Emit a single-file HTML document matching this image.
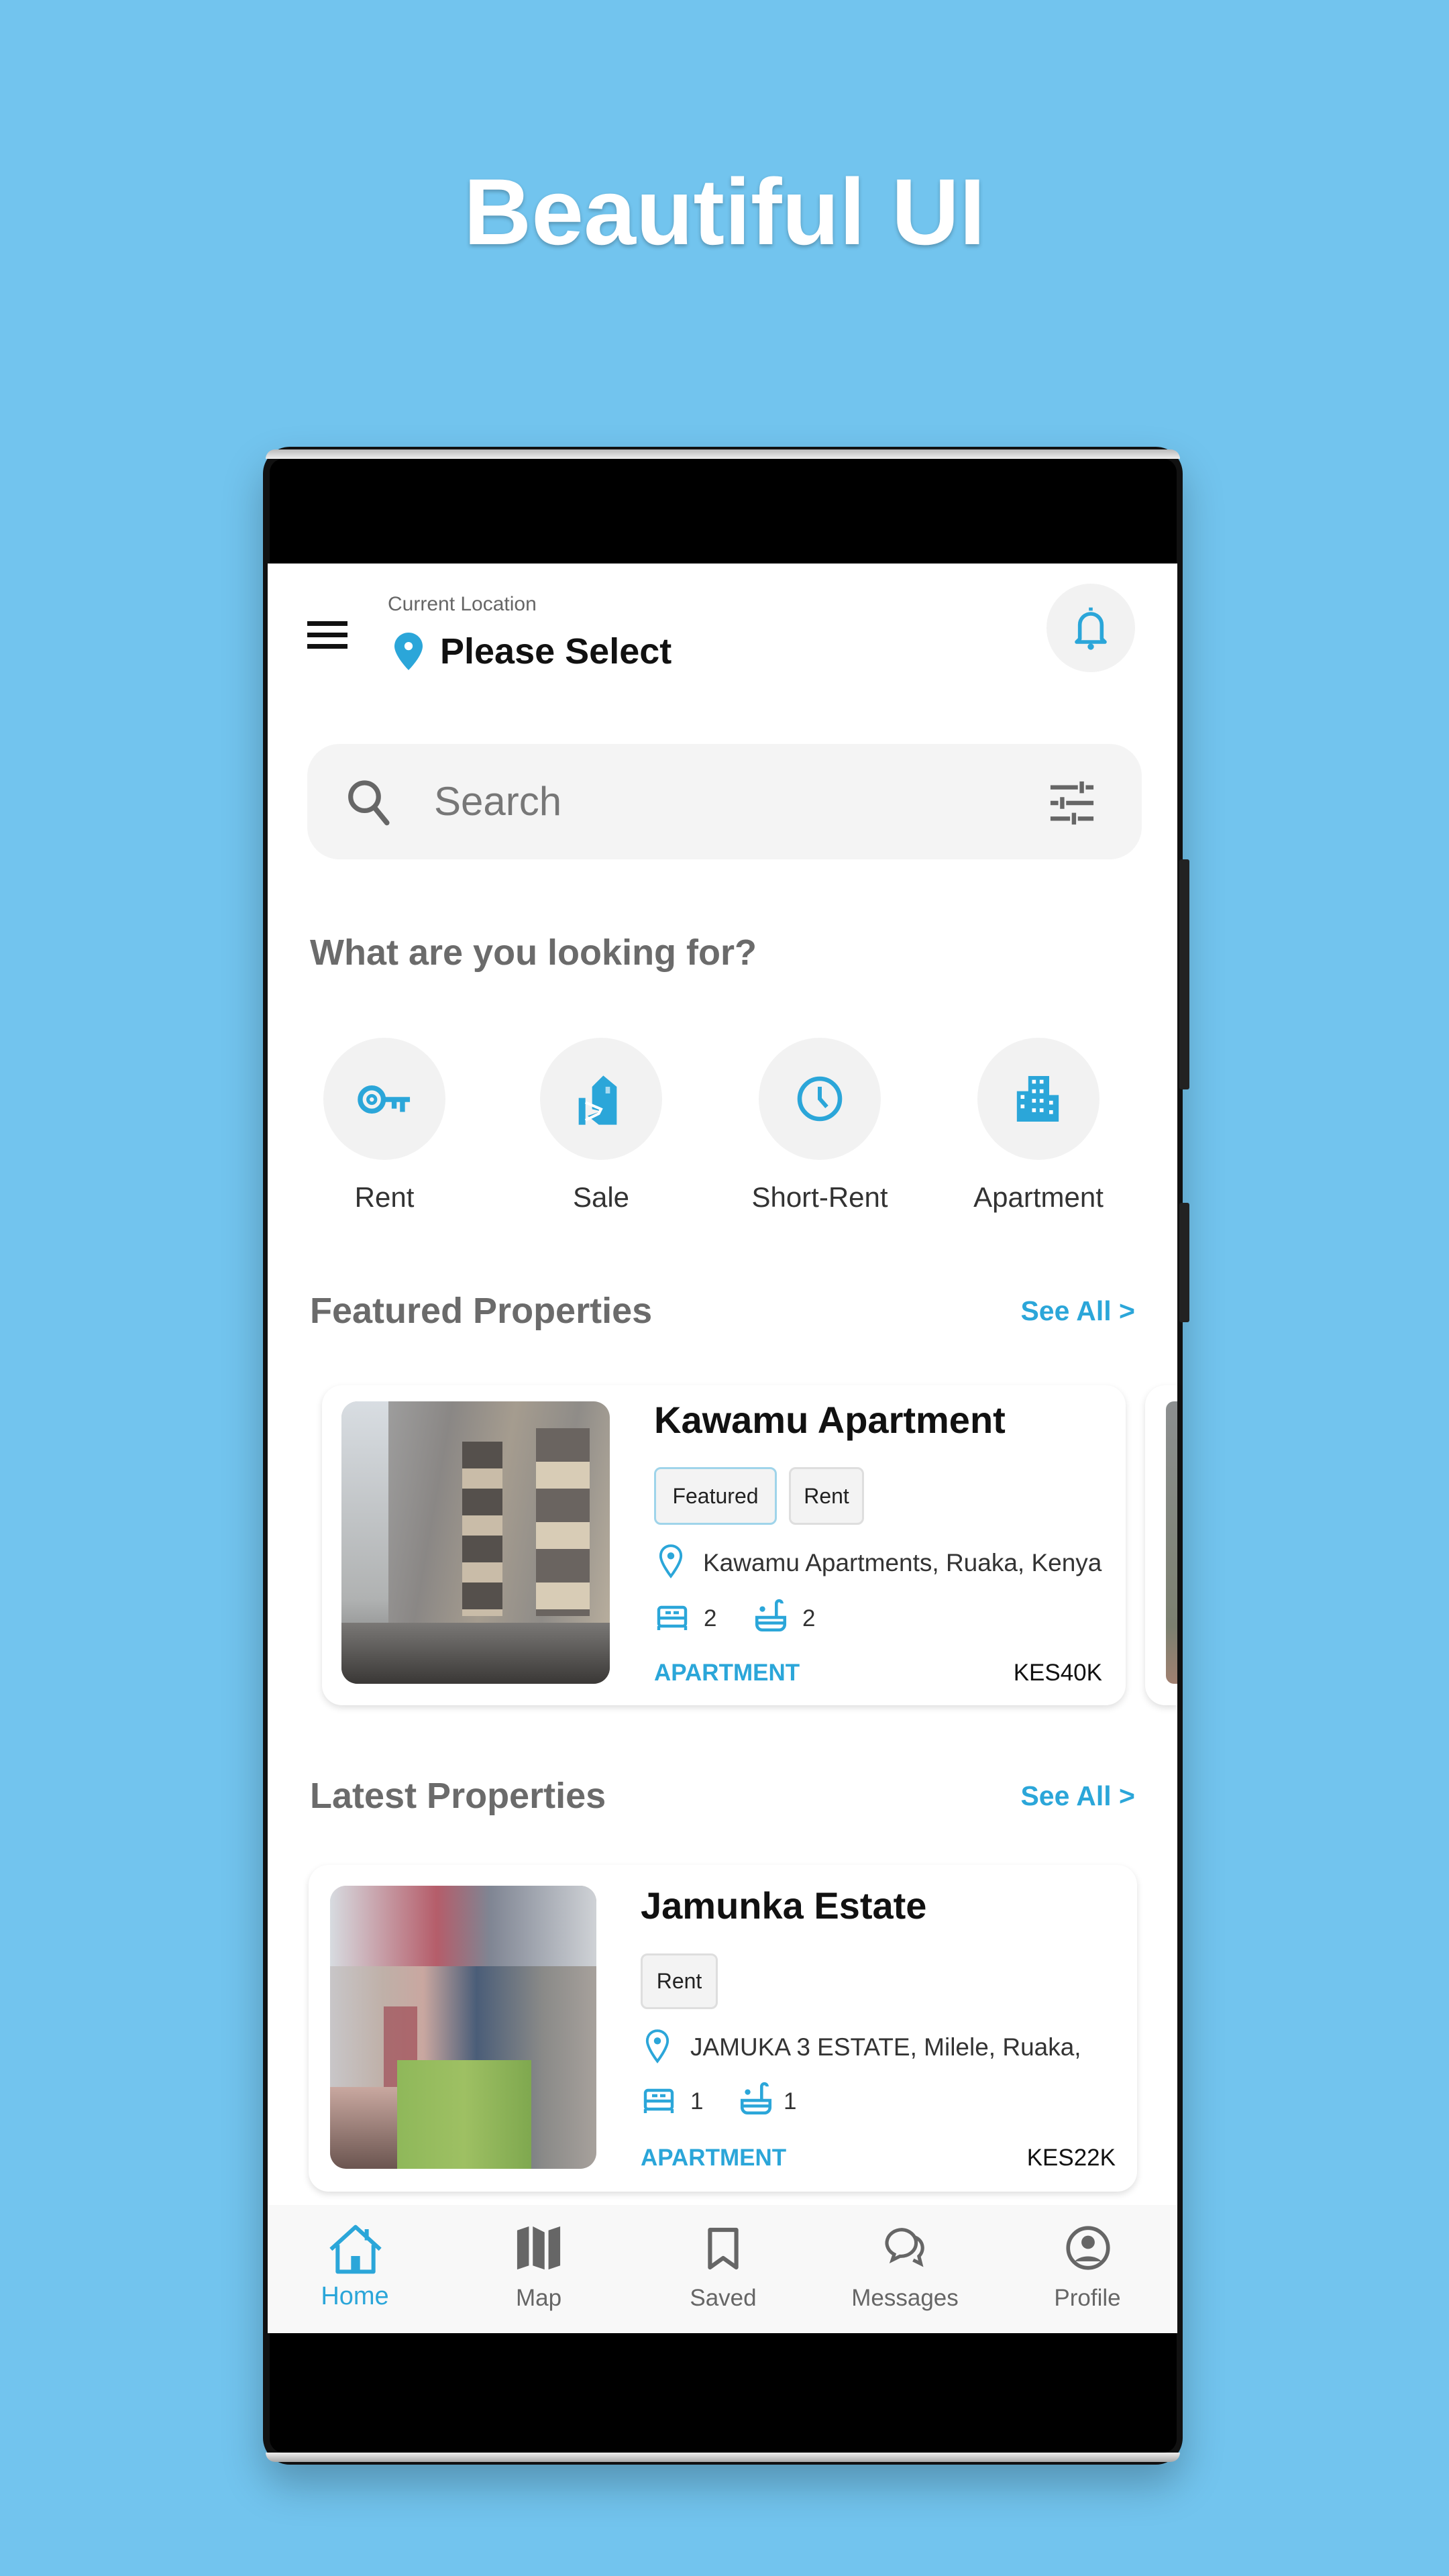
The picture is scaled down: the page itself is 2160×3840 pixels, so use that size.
<!DOCTYPE html>
<html><head><meta charset="utf-8">
<style>
*{margin:0;padding:0;box-sizing:border-box}
body{width:2160px;height:3840px;background:#72c4ee;position:relative;overflow:hidden;font-family:"Liberation Sans",sans-serif}
.a{position:absolute;line-height:1;white-space:nowrap}
.blue{color:#2ba6d9}
.circ{position:absolute;border-radius:50%;background:#f2f2f2}
.tag{position:absolute;background:#f3f3f3;border:3px solid #dedede;border-radius:10px;font-size:32px;color:#222;display:flex;align-items:center;justify-content:center}
.card{position:absolute;background:#fff;border-radius:30px;box-shadow:0 4px 10px rgba(0,0,0,.13)}
</style></head><body>
<div class="a" style="left:0;width:2160px;text-align:center;top:246px;font-size:140px;font-weight:bold;color:#fff;text-shadow:0 3px 6px rgba(0,0,0,.25)">Beautiful UI</div>

<!-- phone frame -->
<div style="position:absolute;left:392px;top:666px;width:1371px;height:3008px;border-radius:40px;background:#111;box-shadow:0 30px 60px rgba(0,0,0,.25)"></div>
<div style="position:absolute;left:396px;top:670px;width:1363px;height:14px;border-radius:20px 20px 0 0;background:linear-gradient(#bbb,#eee)"></div>
<div style="position:absolute;left:396px;top:3656px;width:1363px;height:14px;border-radius:0 0 20px 20px;background:linear-gradient(#eee,#aaa)"></div>
<div style="position:absolute;left:1758px;top:1281px;width:15px;height:343px;background:#222;border-radius:3px"></div>
<div style="position:absolute;left:1758px;top:1793px;width:15px;height:178px;background:#222;border-radius:3px"></div>
<div style="position:absolute;left:402px;top:684px;width:1352px;height:2972px;background:#000;border-radius:20px"></div>

<!-- screen -->
<div style="position:absolute;left:399px;top:840px;width:1356px;height:2638px;background:#fff;overflow:hidden"></div>

<div style="position:absolute;left:0;top:0;width:2160px;height:3840px">
<!-- header -->
<div style="position:absolute;left:458px;top:926px;width:60px;height:7px;background:#111"></div>
<div style="position:absolute;left:458px;top:943px;width:60px;height:7px;background:#111"></div>
<div style="position:absolute;left:458px;top:960px;width:60px;height:7px;background:#111"></div>
<div class="a" style="left:578px;top:886px;font-size:30px;color:#666">Current Location</div>
<svg style="position:absolute;left:588px;top:943px" width="42" height="56" viewBox="0 0 24 32"><path d="M12 0C5.4 0 0 5.2 0 11.6 0 20 12 32 12 32s12-12 12-20.4C24 5.2 18.6 0 12 0z" fill="#2ba6d9"/><circle cx="12" cy="11.5" r="3.5" fill="#fff"/></svg>
<div class="a" style="left:656px;top:944px;font-size:54px;font-weight:bold;color:#111">Please Select</div>
<div class="circ" style="left:1560px;top:870px;width:132px;height:132px"></div>
<svg style="position:absolute;left:1598px;top:900px" width="56" height="72" viewBox="0 0 24 30"><path d="M12 2v2M5 22V13a7 7 0 0 1 14 0v9l2 2H3z" fill="none" stroke="#2ba6d9" stroke-width="2.4" stroke-linejoin="round"/><circle cx="12" cy="27" r="2" fill="#2ba6d9"/></svg>

<!-- search -->
<div style="position:absolute;left:458px;top:1109px;width:1244px;height:172px;border-radius:48px;background:#f4f4f4"></div>
<svg style="position:absolute;left:515px;top:1160px" width="68" height="72" viewBox="0 0 24 26"><circle cx="10" cy="10" r="7.5" fill="none" stroke="#666" stroke-width="2.6"/><path d="M15.5 16l6.5 8" stroke="#666" stroke-width="2.8" stroke-linecap="round"/></svg>
<div class="a" style="left:647px;top:1165px;font-size:60px;color:#777">Search</div>
<svg style="position:absolute;left:1562px;top:1162px" width="72" height="70" viewBox="0 0 24 24"><g stroke="#666" stroke-width="2.2"><path d="M1 4h14M19 4h4M17 1v6M1 12h4M9 12h14M7 9v6M1 20h10M15 20h8M13 17v6"/></g></svg>

<div class="a" style="left:462px;top:1393px;font-size:54px;font-weight:bold;color:#6b6b6b">What are you looking for?</div>

<!-- categories -->
<div class="circ" style="left:482px;top:1547px;width:182px;height:182px"></div>
<div class="circ" style="left:805px;top:1547px;width:182px;height:182px"></div>
<div class="circ" style="left:1131px;top:1547px;width:182px;height:182px"></div>
<div class="circ" style="left:1457px;top:1547px;width:182px;height:182px"></div>
<svg style="position:absolute;left:532px;top:1614px" width="84" height="50" viewBox="0 0 34 20"><circle cx="9" cy="10" r="7" fill="none" stroke="#2ba6d9" stroke-width="3"/><circle cx="9" cy="10" r="2.3" fill="none" stroke="#2ba6d9" stroke-width="2"/><path d="M16 8.5h16v3h-3v6h-3v-6h-2v4h-3v-4h-5z" fill="#2ba6d9"/></svg>
<svg style="position:absolute;left:856px;top:1600px" width="80" height="80" viewBox="0 0 24 24"><path d="M13 1l6 5v17h-8l-5-4 6-2-4-1V6z" fill="#2ba6d9"/><rect x="2" y="11" width="3" height="12" fill="#2ba6d9"/><path d="M5 13l7 3-1 2-6 3" fill="none" stroke="#fff" stroke-width="1.2"/><rect x="14" y="6" width="2" height="3" fill="#fff" opacity=".6"/></svg>
<svg style="position:absolute;left:1186px;top:1602px" width="72" height="72" viewBox="0 0 24 24"><circle cx="12" cy="12" r="10" fill="none" stroke="#2ba6d9" stroke-width="2.2"/><path d="M12 6v6l3.5 4" fill="none" stroke="#2ba6d9" stroke-width="2"/></svg>
<svg style="position:absolute;left:1514px;top:1604px" width="66" height="68" viewBox="0 0 22 24"><path d="M0 8h6V0h11v10h5v14H0z" fill="#2ba6d9"/><g fill="#fff"><rect x="8" y="2" width="2" height="2"/><rect x="12" y="2" width="2" height="2"/><rect x="2" y="10" width="2" height="2"/><rect x="8" y="7" width="2" height="2"/><rect x="12" y="7" width="2" height="2"/><rect x="8" y="12" width="2" height="2"/><rect x="12" y="12" width="2" height="2"/><rect x="17" y="13" width="2" height="2"/><rect x="2" y="15" width="2" height="2"/><rect x="8" y="17" width="2" height="2"/><rect x="12" y="17" width="2" height="2"/><rect x="17" y="18" width="2" height="2"/></g></svg>
<div class="a" style="left:473px;width:200px;text-align:center;top:1764px;font-size:42px;color:#333">Rent</div>
<div class="a" style="left:796px;width:200px;text-align:center;top:1764px;font-size:42px;color:#333">Sale</div>
<div class="a" style="left:1072px;width:300px;text-align:center;top:1764px;font-size:42px;color:#333">Short-Rent</div>
<div class="a" style="left:1398px;width:300px;text-align:center;top:1764px;font-size:42px;color:#333">Apartment</div>

<div class="a" style="left:462px;top:1927px;font-size:54px;font-weight:bold;color:#6b6b6b">Featured Properties</div>
<div class="a blue" style="right:468px;top:1934px;font-size:41px;font-weight:bold">See All &gt;</div>

<!-- featured card -->
<div class="card" style="left:480px;top:2065px;width:1198px;height:477px"></div>
<div class="card" style="left:1707px;top:2065px;width:48px;height:477px;border-radius:30px 0 0 30px"></div>
<div style="position:absolute;left:1738px;top:2089px;width:17px;height:421px;background:linear-gradient(#8c8f90,#7c8070 80%,#a08070);border-radius:12px 0 0 12px"></div>
<div style="position:absolute;left:509px;top:2089px;width:400px;height:421px;border-radius:24px;overflow:hidden;background:linear-gradient(100deg,#c9ccd0 0%,#a0a0a0 12%,#8a8785 35%,#a59c8f 55%,#8f8c88 75%,#bdb2a0 100%)">
<div style="position:absolute;left:0;top:0;width:70px;height:421px;background:linear-gradient(#d8dde2,#b0b2b2 70%,#6b6b6b)"></div>
<div style="position:absolute;left:0;top:330px;width:400px;height:91px;background:linear-gradient(#7a7876,#3a3836)"></div>
<div style="position:absolute;left:180px;top:60px;width:60px;height:260px;background:repeating-linear-gradient(#55504c 0 40px,#c9bca8 40px 70px)"></div>
<div style="position:absolute;left:290px;top:40px;width:80px;height:280px;background:repeating-linear-gradient(#6a6460 0 50px,#d8ccb6 50px 90px)"></div>
</div>
<div class="a" style="left:975px;top:2089px;font-size:56px;font-weight:bold;color:#111">Kawamu Apartment</div>
<div class="tag" style="left:975px;top:2187px;width:183px;height:86px;border-color:#9fd4ea">Featured</div>
<div class="tag" style="left:1176px;top:2187px;width:112px;height:86px">Rent</div>
<svg style="position:absolute;left:982px;top:2302px" width="36" height="52" viewBox="0 0 16 24"><path d="M8 1C4 1 1 4 1 8c0 5 7 14 7 14s7-9 7-14c0-4-3-7-7-7z" fill="none" stroke="#2ba6d9" stroke-width="1.8"/><circle cx="8" cy="8" r="2.4" fill="#2ba6d9"/></svg>
<div class="a" style="left:1048px;top:2311px;font-size:37px;color:#333">Kawamu Apartments, Ruaka, Kenya</div>
<svg style="position:absolute;left:978px;top:2392px" width="48" height="40" viewBox="0 0 24 20"><g fill="none" stroke="#2ba6d9" stroke-width="2.2"><rect x="2" y="2" width="20" height="14" rx="2"/><path d="M2 10h20M2 16v3M22 16v3M7 6h4M13 6h4"/></g></svg>
<div class="a" style="left:1049px;top:2395px;font-size:35px;color:#333">2</div>
<svg style="position:absolute;left:1124px;top:2382px" width="50" height="54" viewBox="0 0 24 26"><g fill="none" stroke="#2ba6d9" stroke-width="2.2"><path d="M16 14V4a2 2 0 0 1 4 0"/><path d="M2 14h20v5a4 4 0 0 1-4 4H6a4 4 0 0 1-4-4z"/><path d="M2 18h20"/></g><circle cx="6" cy="8" r="2" fill="#2ba6d9"/></svg>
<div class="a" style="left:1196px;top:2395px;font-size:35px;color:#333">2</div>
<div class="a blue" style="left:975px;top:2476px;font-size:35px;font-weight:bold">APARTMENT</div>
<div class="a" style="right:517px;top:2476px;font-size:35px;color:#111">KES40K</div>

<div class="a" style="left:462px;top:2650px;font-size:54px;font-weight:bold;color:#6b6b6b">Latest Properties</div>
<div class="a blue" style="right:468px;top:2657px;font-size:41px;font-weight:bold">See All &gt;</div>

<!-- latest card -->
<div class="card" style="left:460px;top:2780px;width:1235px;height:487px"></div>
<div style="position:absolute;left:492px;top:2811px;width:397px;height:422px;border-radius:24px;overflow:hidden;background:linear-gradient(90deg,#c8c6c8 0%,#bfb0a8 20%,#c9a7a0 35%,#4a5d78 55%,#8a8a88 80%,#a7a19c 100%)">
<div style="position:absolute;left:0;top:0;width:397px;height:120px;background:linear-gradient(90deg,#d7dbe0,#b55d6a 40%,#7f8593 60%,#cfd2d6)"></div>
<div style="position:absolute;left:80px;top:180px;width:50px;height:160px;background:#9a3c4a;opacity:.6"></div>
<div style="position:absolute;left:100px;top:260px;width:200px;height:162px;background:linear-gradient(90deg,#8fb85a,#9ec063,#7fa84f)"></div>
<div style="position:absolute;left:0;top:300px;width:100px;height:122px;background:linear-gradient(#c9a8a0,#6b5550)"></div>
</div>
<div class="a" style="left:955px;top:2813px;font-size:56px;font-weight:bold;color:#111">Jamunka Estate</div>
<div class="tag" style="left:955px;top:2912px;width:115px;height:83px">Rent</div>
<svg style="position:absolute;left:962px;top:3025px" width="36" height="52" viewBox="0 0 16 24"><path d="M8 1C4 1 1 4 1 8c0 5 7 14 7 14s7-9 7-14c0-4-3-7-7-7z" fill="none" stroke="#2ba6d9" stroke-width="1.8"/><circle cx="8" cy="8" r="2.4" fill="#2ba6d9"/></svg>
<div class="a" style="left:1029px;top:3033px;font-size:37px;color:#333">JAMUKA 3 ESTATE, Milele, Ruaka,</div>
<svg style="position:absolute;left:958px;top:3112px" width="48" height="40" viewBox="0 0 24 20"><g fill="none" stroke="#2ba6d9" stroke-width="2.2"><rect x="2" y="2" width="20" height="14" rx="2"/><path d="M2 10h20M2 16v3M22 16v3M7 6h4M13 6h4"/></g></svg>
<div class="a" style="left:1029px;top:3115px;font-size:35px;color:#333">1</div>
<svg style="position:absolute;left:1102px;top:3102px" width="50" height="54" viewBox="0 0 24 26"><g fill="none" stroke="#2ba6d9" stroke-width="2.2"><path d="M16 14V4a2 2 0 0 1 4 0"/><path d="M2 14h20v5a4 4 0 0 1-4 4H6a4 4 0 0 1-4-4z"/><path d="M2 18h20"/></g><circle cx="6" cy="8" r="2" fill="#2ba6d9"/></svg>
<div class="a" style="left:1168px;top:3115px;font-size:35px;color:#333">1</div>
<div class="a blue" style="left:955px;top:3199px;font-size:35px;font-weight:bold">APARTMENT</div>
<div class="a" style="right:497px;top:3199px;font-size:35px;color:#111">KES22K</div>

<!-- bottom nav -->
<div style="position:absolute;left:399px;top:3287px;width:1356px;height:191px;background:#f8f8f8"></div>
<svg style="position:absolute;left:490px;top:3312px" width="80" height="82" viewBox="0 0 24 24"><g fill="none" stroke="#2ba6d9" stroke-width="1.8" stroke-linejoin="round"><path d="M1 12L12 2l11 10M4 10v12h16V10M17 3v5"/></g><rect x="10" y="15" width="4" height="7" fill="#2ba6d9"/></svg>
<div class="a blue" style="left:429px;width:200px;text-align:center;top:3404px;font-size:38px">Home</div>
<svg style="position:absolute;left:768px;top:3316px" width="70" height="70" viewBox="0 0 24 24"><path d="M1 3l6-2v20l-6 2zM9 1l6 3v19l-6-2zM17 3l6-2v20l-6 2z" fill="#666"/></svg>
<div class="a" style="left:703px;width:200px;text-align:center;top:3408px;font-size:35px;color:#666">Map</div>
<svg style="position:absolute;left:1050px;top:3318px" width="56" height="68" viewBox="0 0 20 24"><path d="M3 2h14v20l-7-5-7 5z" fill="none" stroke="#666" stroke-width="2.2" stroke-linejoin="round"/></svg>
<div class="a" style="left:978px;width:200px;text-align:center;top:3408px;font-size:35px;color:#666">Saved</div>
<svg style="position:absolute;left:1315px;top:3318px" width="70" height="68" viewBox="0 0 24 24"><g fill="none" stroke="#666" stroke-width="1.8"><path d="M10 2a8 7 0 0 0-4 13l-1 3 4-2a8 7 0 1 0 1-14z"/><path d="M17 6a6 6 0 0 1 2 10l1 4-4-2"/></g></svg>
<div class="a" style="left:1199px;width:300px;text-align:center;top:3408px;font-size:35px;color:#666">Messages</div>
<svg style="position:absolute;left:1588px;top:3316px" width="68" height="70" viewBox="0 0 24 24"><circle cx="12" cy="12" r="10.5" fill="none" stroke="#666" stroke-width="2"/><circle cx="12" cy="9" r="3.5" fill="#666"/><path d="M5 19a8 5 0 0 1 14 0" fill="#666"/></svg>
<div class="a" style="left:1521px;width:200px;text-align:center;top:3408px;font-size:35px;color:#666">Profile</div>
</div>
</body></html>
